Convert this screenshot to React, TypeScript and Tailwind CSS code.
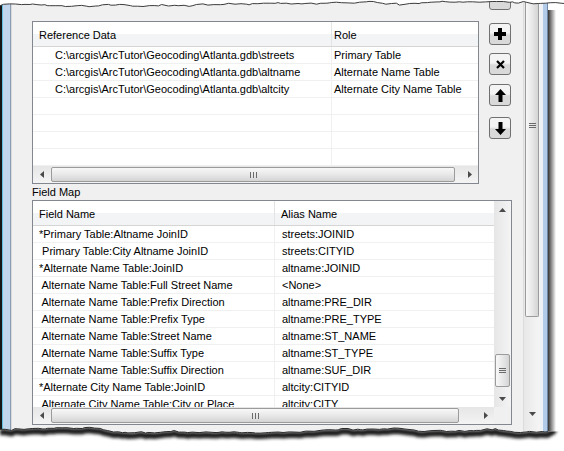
import React from 'react'

type Pt = [number, number]

const refRows: [string, string][] = [
  ['C:\\arcgis\\ArcTutor\\Geocoding\\Atlanta.gdb\\streets', 'Primary Table'],
  ['C:\\arcgis\\ArcTutor\\Geocoding\\Atlanta.gdb\\altname', 'Alternate Name Table'],
  ['C:\\arcgis\\ArcTutor\\Geocoding\\Atlanta.gdb\\altcity', 'Alternate City Name Table'],
  ['', ''],
  ['', ''],
  ['', ''],
  ['', ''],
]

const fieldRows: [string, string][] = [
  ['*Primary Table:Altname JoinID', 'streets:JOINID'],
  [' Primary Table:City Altname JoinID', 'streets:CITYID'],
  ['*Alternate Name Table:JoinID', 'altname:JOINID'],
  [' Alternate Name Table:Full Street Name', '<None>'],
  [' Alternate Name Table:Prefix Direction', 'altname:PRE_DIR'],
  [' Alternate Name Table:Prefix Type', 'altname:PRE_TYPE'],
  [' Alternate Name Table:Street Name', 'altname:ST_NAME'],
  [' Alternate Name Table:Suffix Type', 'altname:ST_TYPE'],
  [' Alternate Name Table:Suffix Direction', 'altname:SUF_DIR'],
  ['*Alternate City Name Table:JoinID', 'altcity:CITYID'],
  [' Alternate City Name Table:City or Place', 'altcity:CITY'],
]

function rng(seed: number) {
  let s = seed
  return () => {
    s = (s * 9301 + 49297) % 233280
    return s / 233280
  }
}

// ragged torn-paper line
function tornEdge(base: number, amp: number, seed: number, xEnd: number): Pt[] {
  const r = rng(seed)
  const pts: Pt[] = []
  let drift = 0
  for (let x = 0; x < xEnd; x += 2 + r() * 5) {
    drift += (r() - 0.5) * amp
    if (drift > amp * 2) drift = amp * 2
    if (drift < -amp * 2) drift = -amp * 2
    pts.push([x, base + drift + (r() - 0.5) * 1.2])
  }
  pts.push([xEnd, base + drift])
  return pts
}

const toStr = (pts: Pt[], dy = 0) =>
  pts.map(([x, y]) => `${x.toFixed(1)},${(y + dy).toFixed(1)}`).join(' ')

function TopEdge() {
  const pts = tornEdge(5, 1.6, 11, 566)
  return (
    <svg className="absolute left-0 top-0" width="564" height="16">
      <polygon points={`0,0 ${toStr(pts)} 566,0`} fill="#fff" />
      <polyline points={toStr(pts)} fill="none" stroke="#3c3c3c" strokeWidth="1" />
    </svg>
  )
}

function BottomEdge() {
  const pts = tornEdge(17, 1.8, 29, 548)
  const last = pts[pts.length - 1]
  const below = `0,40 ${toStr(pts)} 566,${last[1]} 566,40`
  const shadow: Pt[] = [...pts, [553, last[1] - 3], [556, last[1] - 10]]
  return (
    <svg className="absolute left-0 top-[412px]" width="564" height="39">
      <defs>
        <filter id="blur" x="-5%" y="-60%" width="110%" height="220%">
          <feGaussianBlur stdDeviation="1.6" />
        </filter>
        <clipPath id="below">
          <polygon points={below} />
        </clipPath>
      </defs>
      <polygon points={below} fill="#fff" />
      <g clipPath="url(#below)">
        <polyline points={toStr(shadow, 3)} fill="none" stroke="#1e1e1e" strokeWidth="6" filter="url(#blur)" />
      </g>
      <polyline points={toStr(pts)} fill="none" stroke="#2a2a2a" strokeWidth="1" />
    </svg>
  )
}

function Tri({ dir }: { dir: 'l' | 'r' | 'u' | 'd' }) {
  const pts = { l: '4,0 0,3.5 4,7', r: '0,0 4,3.5 0,7', u: '0,4 3.5,0 7,4', d: '0,0 3.5,4 7,0' }[dir]
  const horiz = dir === 'l' || dir === 'r'
  return (
    <svg width={horiz ? 4 : 7} height={horiz ? 7 : 4} viewBox={horiz ? '0 0 4 7' : '0 0 7 4'}>
      <polygon points={pts} fill="#4a4a4a" />
    </svg>
  )
}

function VGrip() {
  return (
    <div className="flex gap-[2px]">
      <span className="w-[1px] h-[6px] bg-[#6a6a6a]" />
      <span className="w-[1px] h-[6px] bg-[#6a6a6a]" />
      <span className="w-[1px] h-[6px] bg-[#6a6a6a]" />
    </div>
  )
}

function HGrip() {
  return (
    <div className="flex flex-col gap-[1px]">
      <span className="w-[7px] h-[1px] bg-[#6a6a6a]" />
      <span className="w-[7px] h-[1px] bg-[#6a6a6a]" />
      <span className="w-[7px] h-[1px] bg-[#6a6a6a]" />
    </div>
  )
}

function HScroll({ thumb }: { thumb: string }) {
  return (
    <div className="flex h-[17px] bg-linear-to-b from-[#e6e6e6] to-[#f4f4f4]">
      <div className="w-[17px] flex items-center justify-center"><Tri dir="l" /></div>
      <div className="flex-1 flex py-[1px] pl-[1px]">
        <div className={`${thumb} rounded-[2px] border border-[#9b9b9b] bg-linear-to-b from-[#f8f8f8] via-[#e8e8e8] to-[#d4d4d4] flex items-center justify-center`}>
          <VGrip />
        </div>
      </div>
      <div className="w-[17px] flex items-center justify-center"><Tri dir="r" /></div>
    </div>
  )
}

function ToolButton({ children, className = '' }: { children?: React.ReactNode; className?: string }) {
  return (
    <div className={`w-[22px] h-[22px] shrink-0 rounded-[3px] border border-[#707070] bg-linear-to-b from-[#f4f4f4] from-45% to-[#d9d9d9] to-55% flex items-center justify-center ${className}`}>
      {children}
    </div>
  )
}

export default function App() {
  return (
    <div className="relative w-[564px] h-[451px] overflow-hidden bg-white text-[11px] text-black font-['Liberation_Sans',Arial,sans-serif]">
      <div className="flex h-[451px]">
        {/* left window frame */}
        <div className="w-[2px] bg-[#161616]" />
        <div className="w-[1px] bg-[#62c2e2]" />
        <div className="w-[7px] bg-[#c1d6ec]" />
        <div className="w-[1px] bg-[#8a9db3]" />
        <div className="w-[1px] bg-[#dadada]" />

        {/* dialog body */}
        <div className="w-[511px] bg-[#f0f0f0] pl-[20px] pt-[21px] overflow-hidden">
          <div className="flex items-start">
            {/* Reference data table */}
            <div className="w-[447px] h-[163px] border border-[#828790] bg-white flex flex-col">
              <div className="flex h-[25px] shrink-0 border-b border-[#d5d5d5] bg-linear-to-b from-white from-50% to-[#f3f4f6] to-50%">
                <div className="w-[299px] border-r border-[#e3e4e6] pl-[6px] pt-[2px] flex items-center">Reference Data</div>
                <div className="flex-1 pl-[2px] pt-[2px] flex items-center">Role</div>
              </div>
              {refRows.map(([path, role], i) => (
                <div key={i} className="flex h-[17px] shrink-0 border-b border-[#f0f0f0]">
                  <div className="w-[299px] border-r border-[#f0f0f0] pl-[22px] leading-[16px] whitespace-nowrap overflow-hidden">{path}</div>
                  <div className="flex-1 pl-[2px] leading-[16px] whitespace-nowrap overflow-hidden">{role}</div>
                </div>
              ))}
              <HScroll thumb="w-[404px]" />
            </div>

            {/* tool buttons */}
            <div className="ml-[10px] -mt-[33px] flex flex-col">
              <ToolButton>
                <div className="w-[8px] h-[3px] bg-[#e8c040] -mt-[6px]" />
              </ToolButton>
              <ToolButton className="mt-[13px]">
                <svg width="12" height="12" viewBox="0 0 12 12">
                  <rect x="0" y="4" width="12" height="4" fill="#000" />
                  <rect x="4" y="0" width="4" height="12" fill="#000" />
                </svg>
              </ToolButton>
              <ToolButton className="mt-[8px]">
                <svg width="9" height="9" viewBox="0 0 9 9">
                  <path d="M1 1 L8 8 M8 1 L1 8" stroke="#000" strokeWidth="2.2" />
                </svg>
              </ToolButton>
              <ToolButton className="mt-[9px]">
                <svg width="11" height="13" viewBox="0 0 11 13">
                  <polygon points="5.5,0 11,6 7.5,6 7.5,13 3.5,13 3.5,6 0,6" fill="#000" />
                </svg>
              </ToolButton>
              <ToolButton className="mt-[11px]">
                <svg width="11" height="13" viewBox="0 0 11 13">
                  <polygon points="5.5,13 11,7 7.5,7 7.5,0 3.5,0 3.5,7 0,7" fill="#000" />
                </svg>
              </ToolButton>
            </div>
          </div>

          <div className="h-[16px] leading-[17px]">Field Map</div>

          {/* Field map table */}
          <div className="w-[480px] h-[225px] border border-[#828790] bg-white flex flex-col">
            <div className="flex h-[206px]">
              <div className="flex-1 flex flex-col overflow-hidden">
                <div className="flex h-[25px] shrink-0 border-b border-[#d5d5d5] bg-linear-to-b from-white from-50% to-[#f3f4f6] to-50%">
                  <div className="w-[242px] border-r border-[#e3e4e6] pl-[6px] pt-[2px] flex items-center">Field Name</div>
                  <div className="flex-1 pl-[6px] pt-[2px] flex items-center">Alias Name</div>
                </div>
                <div className="flex-1 overflow-hidden">
                  {fieldRows.map(([name, alias], i) => (
                    <div key={i} className="flex h-[17px] border-b border-[#f0f0f0]">
                      <div className="w-[242px] border-r border-[#f0f0f0] pl-[6px] leading-[16px] whitespace-pre overflow-hidden">{name}</div>
                      <div className="flex-1 pl-[7px] leading-[16px] whitespace-pre overflow-hidden">{alias}</div>
                    </div>
                  ))}
                </div>
              </div>
              {/* vertical scrollbar */}
              <div className="w-[17px] flex flex-col bg-linear-to-r from-[#e6e6e6] to-[#f4f4f4]">
                <div className="h-[17px] flex items-center justify-center"><Tri dir="u" /></div>
                <div className="flex-1 px-[1px] pt-[136px]">
                  <div className="h-[33px] rounded-[2px] border border-[#9b9b9b] bg-linear-to-r from-[#f8f8f8] via-[#e8e8e8] to-[#d4d4d4] flex items-center justify-center">
                    <HGrip />
                  </div>
                </div>
                <div className="h-[17px] flex items-center justify-center"><Tri dir="d" /></div>
              </div>
            </div>
            <div className="flex">
              <div className="flex-1">
                <HScroll thumb="w-[408px]" />
              </div>
              <div className="w-[17px] h-[17px] bg-[#f0f0f0]" />
            </div>
          </div>
        </div>

        {/* outer scrollbar */}
        <div className="w-[17px] flex flex-col border-l border-[#dcdcdc] bg-linear-to-r from-[#e8e8e8] to-[#f5f5f5]">
          <div className="h-[317px] shrink-0 px-[1px]">
            <div className="h-full rounded-b-[2px] border border-t-0 border-[#9b9b9b] bg-linear-to-r from-[#f8f8f8] via-[#e8e8e8] to-[#d4d4d4] flex flex-col items-center pt-[123px]">
              <HGrip />
            </div>
          </div>
          <div className="h-[88px] shrink-0" />
          <div className="h-[17px] shrink-0 flex items-center justify-center"><Tri dir="d" /></div>
          <div className="flex-1" />
        </div>

        {/* right window frame + drop shadow */}
        <div className="w-[3px] bg-[#eef2f7]" />
        <div className="w-[4px] bg-[#b2cbe8]" />
        <div className="w-[1px] bg-[#6f87a4]" />
        <div className="w-[8px] mt-[10px] h-[425px] bg-linear-to-r from-[#353535] to-[#ffffff00]" />
      </div>

      <TopEdge />
      <BottomEdge />
    </div>
  )
}
